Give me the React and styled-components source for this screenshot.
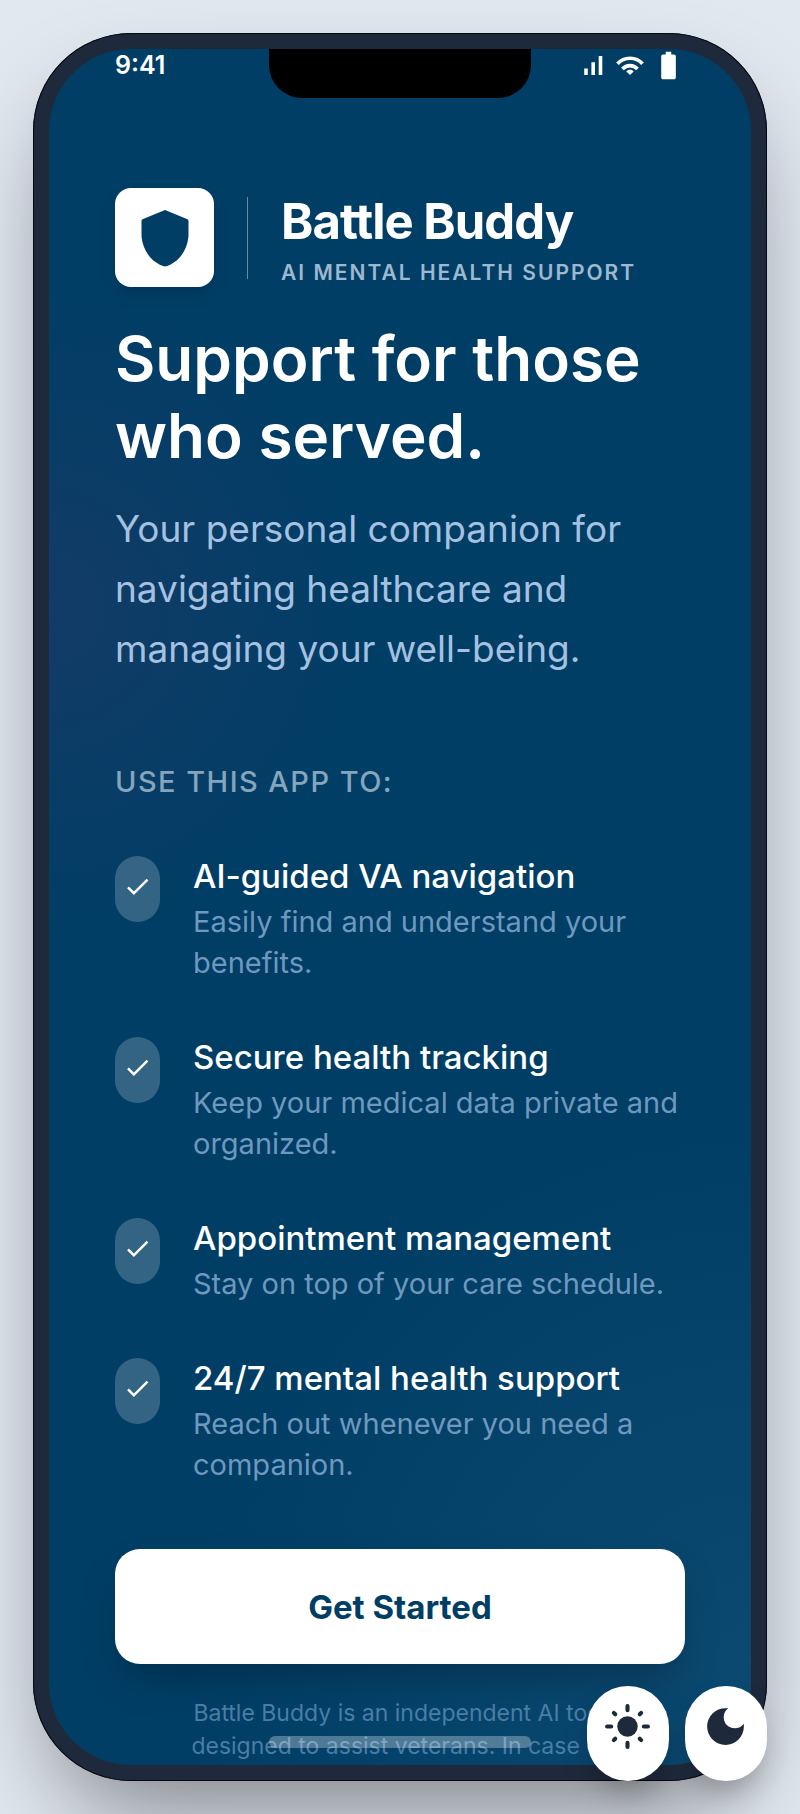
import React from "react";
import styled, { createGlobalStyle } from "styled-components";

const navy = "#003e66";
const ink = "#1e293b";

const GlobalStyle = createGlobalStyle`
  * { box-sizing: border-box; }
  body {
    margin: 0;
    background: #e2e8f0;
    font-family: Inter, "Liberation Sans", sans-serif;
  }
  h1, h2, p, ul { margin: 0; padding: 0; }
`;

const Page = styled.div`
  display: flex;
  height: 100vh;
  padding: 33px;
`;

const Phone = styled.div`
  display: flex;
  flex: 1;
  min-width: 0;
  padding: 16px;
  border-radius: 98px;
  background: ${ink};
  box-shadow: inset 0 0 0 1px #05080f, 0 50px 100px -24px rgba(0, 0, 0, 0.45);
`;

const Screen = styled.div`
  position: relative;
  flex: 1;
  min-width: 0;
  overflow: hidden;
  border-radius: 82px;
  color: #ffffff;
  background:
    radial-gradient(circle 330px at 0 560px, rgba(49, 56, 104, 0.38), rgba(49, 56, 104, 0) 100%),
    radial-gradient(circle 560px at 100% 94%, rgba(30, 90, 128, 0.4), rgba(30, 90, 128, 0) 100%),
    ${navy};
`;

const Notch = styled.div`
  position: absolute;
  top: 0;
  left: 50%;
  width: 262px;
  height: 49px;
  margin-left: -131px;
  border-radius: 0 0 33px 33px;
  background: #000000;
`;

const HomeIndicator = styled.div`
  position: absolute;
  bottom: 17px;
  left: 50%;
  width: 262px;
  height: 12px;
  margin-left: -131px;
  border-radius: 6px;
  background: rgba(255, 255, 255, 0.3);
`;

const StatusBar = styled.div`
  display: flex;
  align-items: center;
  justify-content: space-between;
  height: 33px;
  padding: 0 66px;
  font-size: 25px;
  line-height: 33px;
  font-weight: 600;
`;

const StatusIcons = styled.div`
  display: flex;
  align-items: center;
  svg { display: block; }
`;

const Content = styled.main`
  display: flex;
  flex-direction: column;
  padding: 106px 66px 0;
`;

const Brand = styled.header`
  display: flex;
  align-items: center;
  gap: 33px;
  margin-bottom: 33px;
`;

const LogoTile = styled.div`
  display: flex;
  align-items: center;
  justify-content: center;
  flex: none;
  width: 99px;
  height: 99px;
  border-radius: 16px;
  background: #ffffff;
  box-shadow: 0 8px 16px rgba(0, 0, 0, 0.12);
`;

const Divider = styled.div`
  flex: none;
  width: 1px;
  height: 82px;
  background: rgba(255, 255, 255, 0.4);
`;

const BrandName = styled.h2`
  font-size: 49px;
  line-height: 66px;
  font-weight: 700;
  letter-spacing: -0.02em;
  white-space: nowrap;
`;

const BrandTag = styled.p`
  margin-top: 4px;
  color: #9db8cf;
  font-size: 21px;
  line-height: 27px;
  font-weight: 600;
  letter-spacing: 2px;
  white-space: nowrap;
`;

const Headline = styled.h1`
  margin-bottom: 25px;
  font-size: 62px;
  line-height: 77px;
  font-weight: 600;
`;

const Lead = styled.p`
  margin-bottom: 82px;
  color: #a6c1e0;
  font-size: 37px;
  line-height: 60px;
`;

const SectionTitle = styled.h2`
  margin-bottom: 50px;
  color: #85a5bc;
  font-size: 29px;
  line-height: 41px;
  font-weight: 500;
  letter-spacing: 0.05em;
`;

const Features = styled.ul`
  display: flex;
  flex-direction: column;
  gap: 50px;
  margin-bottom: 64px;
  list-style: none;
`;

const Feature = styled.li`
  display: flex;
  align-items: flex-start;
  gap: 33px;
`;

const Tick = styled.span`
  display: flex;
  flex: none;
  justify-content: center;
  width: 45px;
  height: 66px;
  margin-top: 4px;
  padding-top: 16px;
  border-radius: 23px;
  background: rgba(255, 255, 255, 0.2);
`;

const FeatureTitle = styled.p`
  font-size: 33px;
  line-height: 49px;
  font-weight: 500;
`;

const FeatureText = styled.p`
  color: #6f98be;
  font-size: 29px;
  line-height: 41px;
`;

const StartButton = styled.button`
  height: 115px;
  margin-bottom: 33px;
  border: 0;
  border-radius: 25px;
  background: #ffffff;
  color: ${navy};
  font: inherit;
  font-size: 33px;
  font-weight: 700;
  box-shadow: 0 20px 40px -8px rgba(0, 0, 0, 0.25);
`;

const Disclaimer = styled.p`
  align-self: center;
  max-width: 440px;
  color: #4a7da6;
  font-size: 23px;
  line-height: 33px;
  text-align: center;
`;

const ThemeButtons = styled.div`
  position: fixed;
  right: 33px;
  bottom: 33px;
  display: flex;
  gap: 16px;
`;

const ThemeButton = styled.button`
  display: flex;
  align-items: flex-start;
  width: 82px;
  height: 95px;
  padding: 16px;
  border: 0;
  border-radius: 41px;
  background: #ffffff;
  color: ${ink};
  box-shadow: 0 16px 30px -6px rgba(0, 0, 0, 0.25);
`;

const features = [
  ["AI-guided VA navigation", "Easily find and understand your benefits."],
  ["Secure health tracking", "Keep your medical data private and organized."],
  ["Appointment management", "Stay on top of your care schedule."],
  ["24/7 mental health support", "Reach out whenever you need a companion."],
];

const ShieldIcon = () => (
  <svg width="48" height="58" viewBox="0 0 48 58" fill={navy} aria-hidden="true">
    <path d="M24 1 46.5 10.3Q47.5 10.8 47.5 12V25C47.5 39 38.5 54 24 57.5 9.5 54 .5 39 .5 25V12Q.5 10.8 1.5 10.3Z" />
  </svg>
);

const SignalIcon = () => (
  <svg width="33" height="33" viewBox="0 0 33 33" fill="currentColor" aria-hidden="true">
    <path d="M7.200 19.500h3.600v6.500H7.200zM14.400 13.200h3.600v12.800h-3.600zM21.700 7h3.600v19h-3.600z" />
  </svg>
);

const WifiIcon = () => (
  <svg width="42" height="33" viewBox="0 0 42 33" fill="none" stroke="currentColor" strokeWidth="3.6" aria-hidden="true">
    <path d="M7.500 14.800C14 7.300 26 7.300 32.500 14.800M12.500 20C16.500 15.500 23.500 15.500 27.500 20" />
    <path d="M20 20.700c1.600 0 2.900.7 3.700 1.700L20 26l-3.700-3.600c.8-1 2.100-1.700 3.700-1.700z" fill="currentColor" stroke="none" />
  </svg>
);

const BatteryIcon = () => (
  <svg width="33" height="33" viewBox="0 0 24 24" fill="currentColor" aria-hidden="true">
    <path d="M16 4H14V2h-4v2H8C7.300 4 6.700 4.600 6.700 5.330v15.330C6.700 21.400 7.300 22 8 22h8c.74 0 1.340-.6 1.340-1.330V5.330C17.340 4.600 16.700 4 16 4z" />
  </svg>
);

const CheckIcon = () => (
  <svg width="29" height="29" viewBox="0 0 24 24" fill="currentColor" aria-hidden="true">
    <path d="M9 16.170 4.830 12l-1.420 1.410L9 19 21 7l-1.410-1.410z" />
  </svg>
);

const SunIcon = () => (
  <svg width="49" height="49" viewBox="0 0 24 24" aria-hidden="true">
    <circle cx="12" cy="12" r="5" fill="currentColor" />
    <path
      d="M12 2v2M12 20v2M2 12h2M20 12h2M5.300 5.300l.7.7M18 18l.7.7M18.700 5.300l-.7.7M6 18l-.7.7"
      fill="none"
      stroke="currentColor"
      strokeWidth="2"
      strokeLinecap="round"
    />
  </svg>
);

const MoonIcon = () => (
  <svg width="49" height="49" viewBox="0 0 24 24" fill="currentColor" aria-hidden="true">
    <path d="M12 3a9 9 0 1 0 9 9c0-.46-.04-.92-.1-1.360a5.389 5.389 0 0 1-4.400 2.260 5.403 5.403 0 0 1-3.140-9.800c-.44-.06-.9-.1-1.360-.1z" />
  </svg>
);

export default function App() {
  return (
    <>
      <GlobalStyle />
      <Page>
        <Phone>
          <Screen>
            <StatusBar>
              <span>9:41</span>
              <StatusIcons>
                <SignalIcon />
                <WifiIcon />
                <BatteryIcon />
              </StatusIcons>
            </StatusBar>
            <Content>
              <Brand>
                <LogoTile>
                  <ShieldIcon />
                </LogoTile>
                <Divider />
                <div>
                  <BrandName>Battle Buddy</BrandName>
                  <BrandTag>AI MENTAL HEALTH SUPPORT</BrandTag>
                </div>
              </Brand>
              <Headline>Support for those who served.</Headline>
              <Lead>Your personal companion for navigating healthcare and managing your well-being.</Lead>
              <SectionTitle>USE THIS APP TO:</SectionTitle>
              <Features>
                {features.map(([title, text]) => (
                  <Feature key={title}>
                    <Tick>
                      <CheckIcon />
                    </Tick>
                    <div>
                      <FeatureTitle>{title}</FeatureTitle>
                      <FeatureText>{text}</FeatureText>
                    </div>
                  </Feature>
                ))}
              </Features>
              <StartButton type="button">Get Started</StartButton>
              <Disclaimer>Battle Buddy is an independent AI tool designed to assist veterans. In case of</Disclaimer>
            </Content>
            <Notch />
            <HomeIndicator />
          </Screen>
        </Phone>
        <ThemeButtons>
          <ThemeButton type="button" aria-label="Light theme">
            <SunIcon />
          </ThemeButton>
          <ThemeButton type="button" aria-label="Dark theme">
            <MoonIcon />
          </ThemeButton>
        </ThemeButtons>
      </Page>
    </>
  );
}
